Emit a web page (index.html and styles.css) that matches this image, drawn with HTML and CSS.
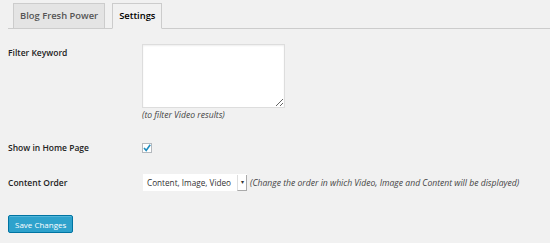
FILE: index.html
```html
<!DOCTYPE html>
<html>
  <head>
    <title>Blog Fresh Power Settings</title>
    <link rel="stylesheet" href="styles.css">
  </head>
  <body>
    <div class="nav-tabs">
      <a class="nav-tab" href="#">Blog Fresh Power</a>
      <a class="nav-tab active" href="#">Settings</a>
    </div>

    <form class="settings">
      <div class="form-row">
        <label class="label" for="keyword">Filter Keyword</label>
        <div class="field">
          <textarea id="keyword"></textarea>
          <p class="description">(to filter Video results)</p>
        </div>
      </div>

      <div class="form-row home-row">
        <label class="label" for="home">Show in Home Page</label>
        <div class="field">
          <span class="checkbox">
            <svg width="8" height="8" viewBox="0 0 8 8"><path d="M1 4 L3.2 6.4 L7.2 0.8" fill="none" stroke="#1e8cbe" stroke-width="1.6"/></svg>
          </span>
        </div>
      </div>

      <div class="form-row">
        <label class="label" for="order">Content Order</label>
        <div class="field inline">
          <div class="select">
            <span>Content, Image, Video</span>
            <span class="select-arrow">&#9662;</span>
          </div>
          <span class="description">(Change the order in which Video, Image and Content will be displayed)</span>
        </div>
      </div>

      <div class="submit">
        <button type="button" class="button-primary">Save Changes</button>
      </div>
    </form>
  </body>
</html>
```

FILE: styles.css
```css
body {
  margin: 0;
  padding: 3px 0 0 8px;
  background: #f1f1f1;
  font-family: "Open Sans", sans-serif;
  color: #444;
  font-size: 8px;
}

.nav-tabs {
  display: flex;
  gap: 7px;
  padding-left: 5px;
  border-bottom: 1px solid #ccc;
}

.nav-tab {
  display: block;
  padding: 0 6px;
  height: 24px;
  line-height: 24px;
  border: 1px solid #ccc;
  border-bottom: none;
  background: #e4e4e4;
  color: #555;
  font-size: 9.4px;
  font-weight: 600;
  text-decoration: none;
  margin-bottom: -1px;
}

.nav-tab.active {
  background: #f1f1f1;
  color: #000;
  height: 24px;
  border-bottom: 1px solid #f1f1f1;
}

.settings {
  padding-top: 15px;
}

.form-row {
  display: grid;
  grid-template-columns: 134px 1fr;
  margin-bottom: 18px;
}

.home-row {
  margin-bottom: 21px;
}

.label {
  font-size: 8.5px;
  font-weight: 600;
  color: #222;
  padding-top: 3px;
}

.field textarea {
  display: block;
  width: 143px;
  height: 64px;
  margin: 0;
  padding: 0;
  border: 1px solid #ddd;
  background: #fff;
  box-shadow: inset 0 1px 2px rgba(0, 0, 0, 0.07);
  box-sizing: border-box;
}

.description {
  margin: 1px 0 0;
  font-style: italic;
  font-size: 8.6px;
  color: #444;
}

.checkbox {
  display: flex;
  align-items: center;
  justify-content: center;
  width: 8px;
  height: 8px;
  border: 1px solid #b4b9be;
  background: #fff;
  margin-top: 4px;
}

.field.inline {
  display: flex;
  align-items: center;
  gap: 3px;
}

.field.inline .description {
  margin: 0;
}

.select {
  display: flex;
  align-items: center;
  width: 104px;
  height: 17px;
  margin-left: 1px;
  background: #fff;
  font-size: 8.2px;
  color: #333;
  padding-left: 4px;
  box-sizing: border-box;
  justify-content: space-between;
}

.select-arrow {
  width: 8px;
  height: 15px;
  border-left: 1px solid #ddd;
  border-right: 1px solid #aaa;
  border-bottom: 1px solid #aaa;
  font-size: 6px;
  line-height: 15px;
  text-align: center;
  color: #333;
}

.submit {
  padding-top: 6px;
}

.button-primary {
  height: 18px;
  padding: 0 6px;
  border: 1px solid #0074a2;
  border-radius: 2px;
  background: #2ea2cc;
  color: #fff;
  font-family: "Open Sans", sans-serif;
  font-size: 8px;
  box-shadow: inset 0 1px 0 rgba(120, 200, 230, 0.5);
}
```
